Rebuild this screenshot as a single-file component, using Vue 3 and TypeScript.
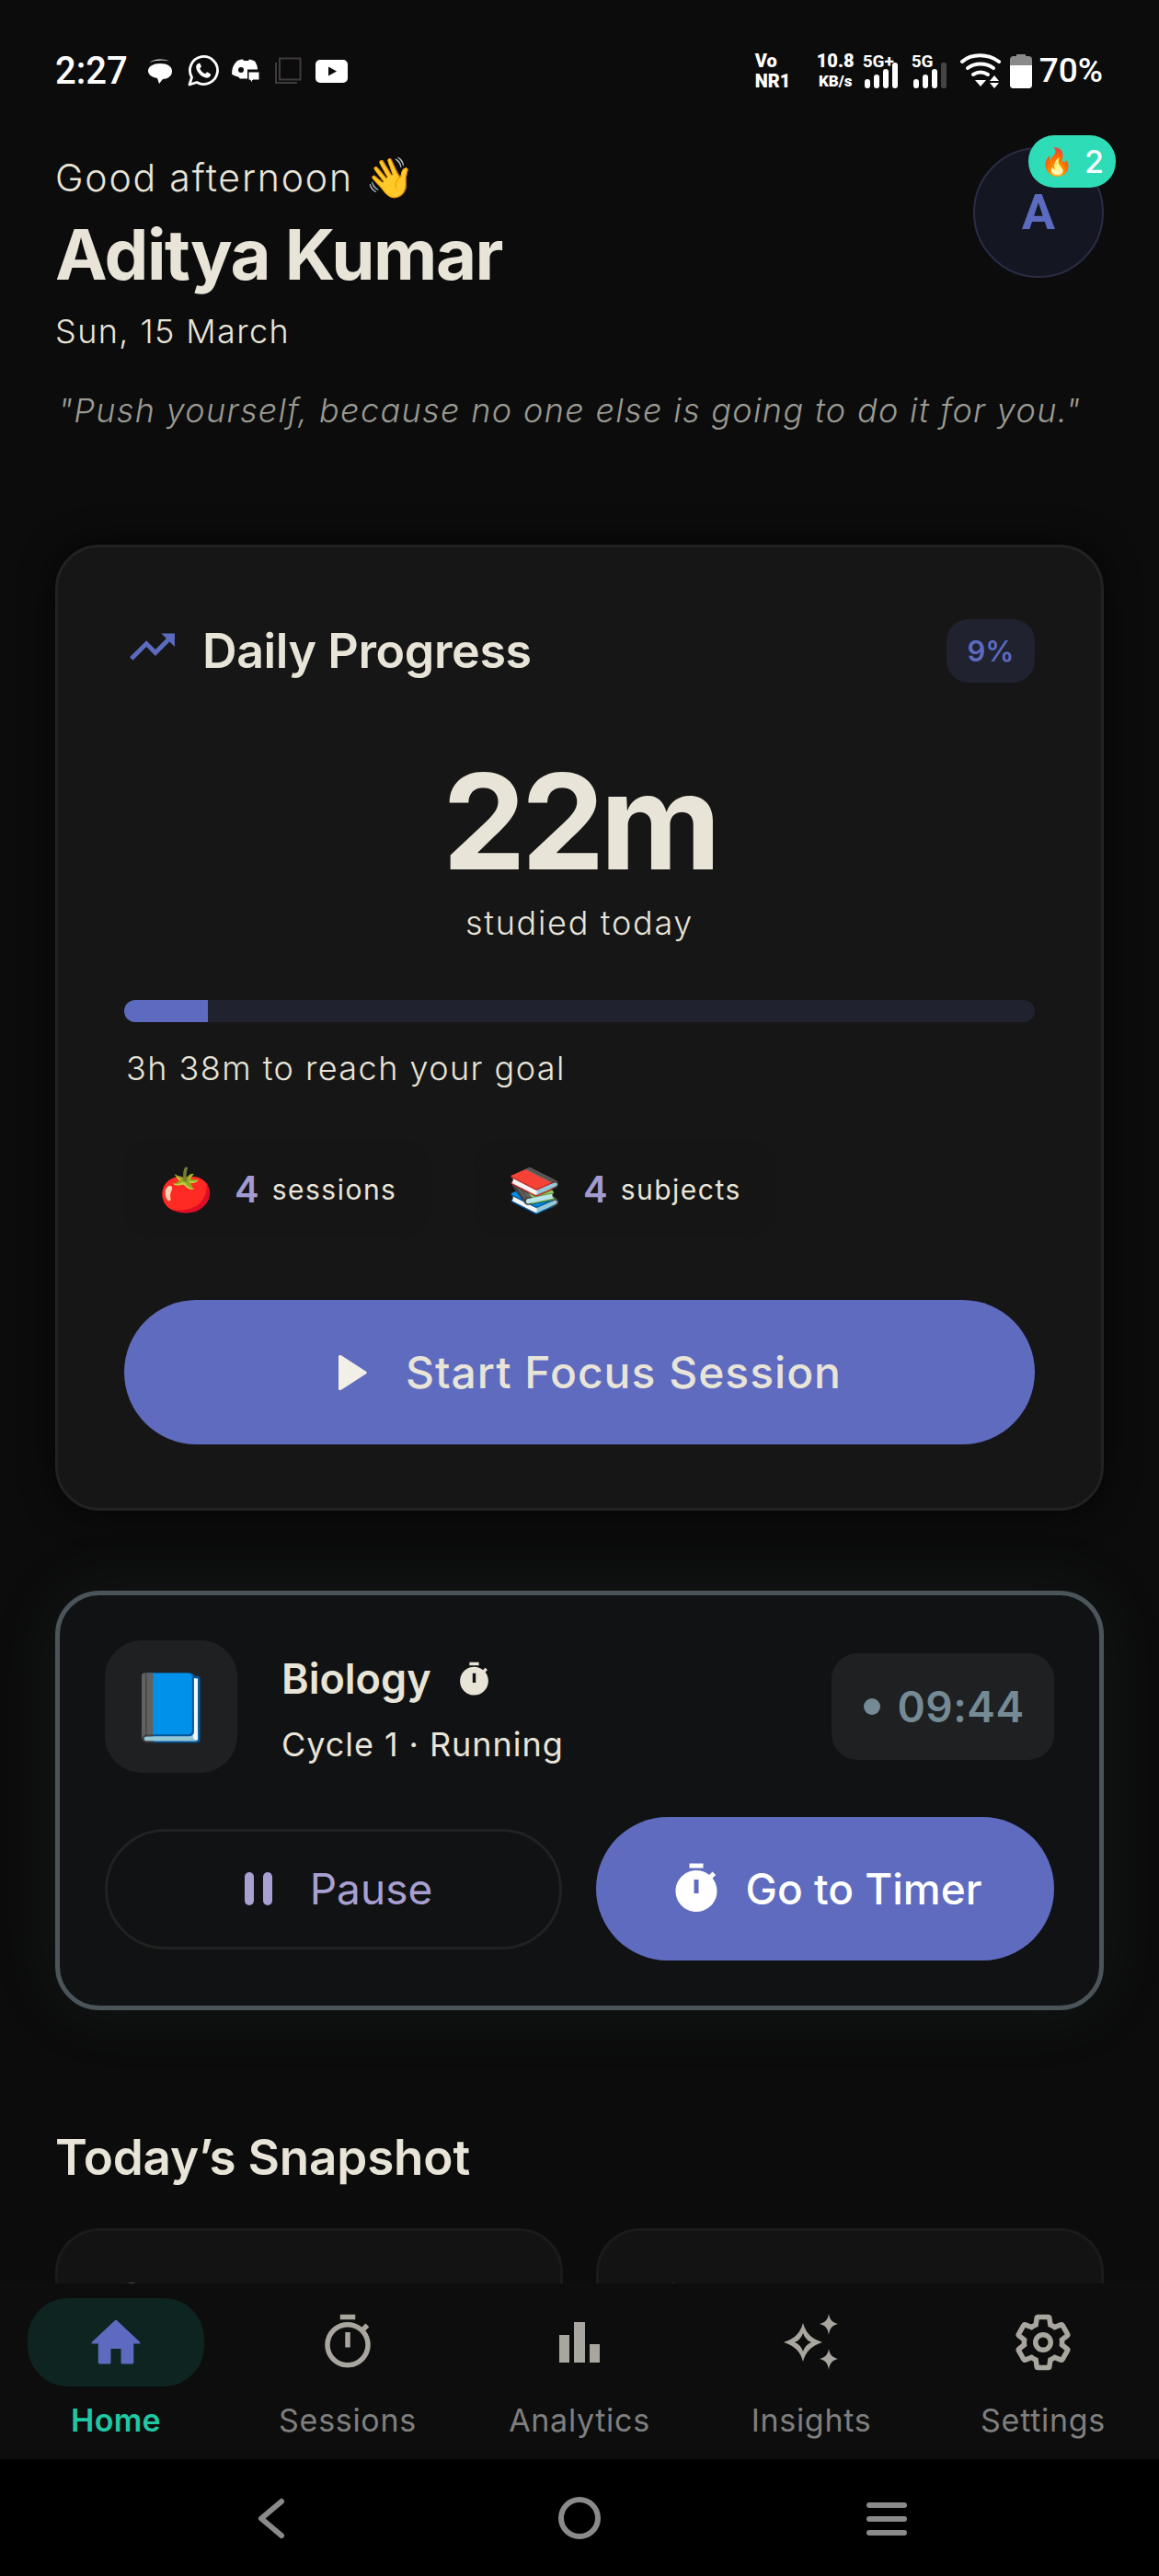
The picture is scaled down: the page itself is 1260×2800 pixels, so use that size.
<script setup lang="ts">
const timerFilled = 'M15 1H9v2h6V1zm-4 13h2V8h-2v6zm8.03-6.61l1.42-1.42c-.43-.51-.9-.99-1.41-1.41l-1.42 1.42C16.07 4.74 14.12 4 12 4c-4.97 0-9 4.03-9 9s4.02 9 9 9 9-4.03 9-9c0-2.12-.74-4.07-1.97-5.61z'
const timerOutlined = 'M15 1H9v2h6V1zm-4 13h2V8h-2v6zm8.03-6.61l1.42-1.42c-.43-.51-.9-.99-1.41-1.41l-1.42 1.42C16.07 4.74 14.12 4 12 4c-4.97 0-9 4.03-9 9s4.02 9 9 9c4.97 0 9-4.03 9-9 0-2.12-.74-4.07-1.97-5.61zM12 20c-3.87 0-7-3.13-7-7s3.13-7 7-7 7 3.13 7 7-3.13 7-7 7z'
const gear = 'M19.43 12.98c.04-.32.07-.64.07-.98 0-.34-.03-.66-.07-.98l2.11-1.65c.19-.15.24-.42.12-.64l-2-3.46c-.12-.22-.39-.3-.61-.22l-2.49 1c-.52-.4-1.08-.73-1.69-.98l-.38-2.65C14.46 2.18 14.25 2 14 2h-4c-.25 0-.46.18-.49.42l-.38 2.65c-.61.25-1.17.59-1.69.98l-2.49-1c-.23-.09-.49 0-.61.22l-2 3.46c-.13.22-.07.49.12.64l2.11 1.65c-.04.32-.07.65-.07.98 0 .33.03.66.07.98l-2.11 1.65c-.19.15-.24.42-.12.64l2 3.46c.12.22.39.3.61.22l2.49-1c.52.4 1.08.73 1.69.98l.38 2.65c.03.24.24.42.49.42h4c.25 0 .46-.18.49-.42l.38-2.65c.61-.25 1.17-.59 1.69-.98l2.49 1c.23.09.49 0 .61-.22l2-3.46c.12-.22.07-.49-.12-.64l-2.11-1.65z'
const progress = 9.2
</script>

<template>
  <div class="phone">
    <main class="scroll">
      <div class="status">
        <div class="status-left">
          <span class="time">2:27</span>
          <svg class="s-chat" width="30" height="30" viewBox="0 0 30 30"><path d="M4 6c3-4 16-5 22-1-6-2-16-2-22 1z" fill="#fff"/><path d="M15 7c8 0 13 3 13 8.500S23 24 18 24l-4 5-2-6C6 22 2 19 2 15c0-5 6-8 13-8z" fill="#fff"/></svg>
          <svg class="s-wa" width="34" height="34" viewBox="0 0 34 34"><path d="M2 32l2.500-8A15 15 0 1 1 10 29.500z" fill="none" stroke="#fff" stroke-width="2.800" stroke-linejoin="round"/><path d="M11.500 9c-2 1-3 3-2 6 1.500 4 5 8 10 9.500 2.500.5 4.500-.5 5.500-2.500l-.2-1.800-3.800-2-1.800 2c-3-1-5.200-3.500-6-6l1.800-1.700-1.800-4z" fill="#fff"/></svg>
          <svg class="s-dc" width="32" height="28" viewBox="0 0 32 28"><path d="M7 3c3-1.200 5-1.500 6-1.500l1 1.500h5l1-1.500c2 .3 4 1 6 2 2 3 3 6 3 9H18v10H10l-2-2c-3-.5-5-1.500-7-3 0-6 2-11 6-14.500z" fill="#fff"/><circle cx="11" cy="13" r="3" fill="#0c0c0c"/><path d="M19 15h12v9h-7l-2 3-1-3h-2z" fill="#fff" stroke="#0c0c0c" stroke-width="1"/></svg>
          <svg class="s-sq" width="30" height="30" viewBox="0 0 30 30"><path d="M2 6v22h23" fill="none" stroke="#3f3a3f" stroke-width="2"/><rect x="6" y="1.500" width="22.500" height="23" fill="none" stroke="#3f3a3f" stroke-width="2"/></svg>
          <svg class="s-yt" width="35" height="25" viewBox="0 0 35 25"><rect width="35" height="25" rx="5" fill="#fff"/><path d="M14 7.500l9 5-9 5z" fill="#0c0c0c"/></svg>
        </div>
        <div class="status-right">
          <span class="stack w-vo"><b>Vo</b><b>NR1</b></span>
          <span class="stack w-kb"><b class="num">10.8</b><b>KB/s</b></span>
          <span class="net">
            <b>5G+</b>
            <svg width="40" height="30" viewBox="0 0 40 30"><g fill="#fff"><rect x="2" y="18" width="6" height="10" rx="3"/><rect x="12" y="13" width="6" height="15" rx="3"/><rect x="22" y="7" width="6" height="21" rx="3"/><rect x="32" y="0" width="6" height="28" rx="3"/></g></svg>
          </span>
          <span class="net">
            <b>5G</b>
            <svg width="40" height="30" viewBox="0 0 40 30"><g fill="#fff"><rect x="2" y="18" width="6" height="10" rx="3"/><rect x="12" y="13" width="6" height="15" rx="3"/><rect x="22" y="7" width="6" height="21" rx="3"/></g><rect x="32" y="0" width="6" height="28" rx="2" fill="#444"/></svg>
          </span>
          <svg class="s-wifi" width="46" height="38" viewBox="0 0 46 38"><g fill="none" stroke="#fff" stroke-width="4" stroke-linecap="round"><path d="M2 9c10-9 28-9 40 0"/><path d="M8 16c8-6 20-6 28 0"/><path d="M14 23c5-3 11-3 16 0"/></g><path d="M16 29h12l-6 7z" fill="#fff"/><path d="M37 24l5 6H32zM37 38l-5-6h10z" fill="#fff"/></svg>
          <svg class="s-bat" width="24" height="37" viewBox="0 0 24 37"><path d="M7 0h10v2h3a4 4 0 0 1 4 4v27a4 4 0 0 1-4 4H4a4 4 0 0 1-4-4V6a4 4 0 0 1 4-4h3z" fill="#8a8a8a"/><path d="M0 12h24v21a4 4 0 0 1-4 4H4a4 4 0 0 1-4-4z" fill="#fff"/></svg>
          <span class="pct">70%</span>
        </div>
      </div>

      <header class="head">
        <div>
          <p class="greet">Good afternoon <span class="emoji">👋</span></p>
          <h1 class="name">Aditya Kumar</h1>
          <p class="date">Sun, 15 March</p>
        </div>
        <div class="avatar">
          A
          <span class="streak"><span class="flame">🔥</span><span>2</span></span>
        </div>
      </header>
      <p class="quote">"Push yourself, because no one else is going to do it for you."</p>

      <section class="card progress">
        <div class="card-head">
          <div class="title-wrap">
            <svg class="trend" width="59" height="44" viewBox="0 0 24 18"><path d="M16 1l2.290 2.290-4.880 4.880-4-4L2 11.590 3.410 13l6-6 4 4 6.300-6.290L22 7V1z" fill="#5c6bc0"/></svg>
            <h2>Daily Progress</h2>
          </div>
          <span class="pct-pill">9%</span>
        </div>
        <div class="big">22m</div>
        <p class="sub">studied today</p>
        <div class="track"><div class="fill" :style="{ width: progress + '%' }"></div></div>
        <p class="goal">3h 38m to reach your goal</p>
        <div class="chips">
          <div class="chip c1"><span class="chip-emoji">🍅</span><b>4</b><span class="chip-label">sessions</span></div>
          <div class="chip c2"><span class="chip-emoji">📚</span><b>4</b><span class="chip-label">subjects</span></div>
        </div>
        <button class="start">
          <svg width="36" height="42" viewBox="0 0 36 42"><path d="M3 3.500v35c0 1.500 1.500 2 3 1.200l27-17.500c1-.7 1-1.700 0-2.400L6 2.300C4.500 1.500 3 2 3 3.500z" fill="#f2efe6"/></svg>
          <span>Start Focus Session</span>
        </button>
      </section>

      <section class="card running">
        <div class="run-top">
          <div class="tile"><span>📘</span></div>
          <div class="run-text">
            <div class="subject">Biology
              <svg width="41" height="41" viewBox="0 0 24 24"><path :d="timerFilled" fill="#e8e4d8" fill-rule="evenodd"/></svg>
            </div>
            <p class="cycle">Cycle 1 · Running</p>
          </div>
          <div class="clock"><i></i><span>09:44</span></div>
        </div>
        <div class="run-actions">
          <button class="pause">
            <svg width="32" height="36" viewBox="0 0 32 36"><rect x="1" y="0" width="10" height="36" rx="5" fill="#a7a0d0"/><rect x="21" y="0" width="10" height="36" rx="5" fill="#a7a0d0"/></svg>
            <span>Pause</span>
          </button>
          <button class="goto">
            <svg width="60" height="60" viewBox="0 0 24 24"><path :d="timerFilled" fill="#fff" fill-rule="evenodd"/></svg>
            <span>Go to Timer</span>
          </button>
        </div>
      </section>

      <h2 class="snap-title">Today’s Snapshot</h2>
      <div class="snap">
        <div class="snap-card">
          <svg class="snap-icon" width="48" height="48" viewBox="0 0 48 48"><circle cx="24" cy="24" r="21" fill="none" stroke="#9a9a94" stroke-width="5"/></svg>
        </div>
        <div class="snap-card sc2">
          <svg class="snap-icon" width="48" height="48" viewBox="0 0 48 48"><path d="M24 0l-8 24h16z" fill="#c9c23a"/></svg>
        </div>
      </div>
    </main>

    <nav class="nav">
      <div class="nav-item active">
        <div class="nav-ico">
          <svg width="66" height="66" viewBox="0 0 24 24"><path d="M10 20v-5.500h4V20c0 .3.200.5.500.5h4c.3 0 .5-.2.500-.5v-7.500h2.300c.3 0 .4-.4.200-.6L12.300 3.300a.5.500 0 0 0-.6 0L2.500 11.900c-.2.200-.1.600.2.600H5V20c0 .3.200.5.500.5h4c.3 0 .5-.2.500-.5z" fill="#5c6bc0"/></svg>
        </div>
        <span>Home</span>
      </div>
      <div class="nav-item">
        <div class="nav-ico"><svg width="66" height="66" viewBox="0 0 24 24"><path :d="timerOutlined" fill="#a8a69e"/></svg></div>
        <span>Sessions</span>
      </div>
      <div class="nav-item">
        <div class="nav-ico"><svg width="44" height="44" viewBox="0 0 44 44"><g fill="#a8a69e"><rect x="0" y="14" width="11" height="30"/><rect x="16" y="0" width="12" height="44"/><rect x="33" y="24" width="11" height="20"/></g></svg></div>
        <span>Analytics</span>
      </div>
      <div class="nav-item">
        <div class="nav-ico">
          <svg width="62" height="62" viewBox="0 0 62 62"><path fill-rule="evenodd" d="M22 10Q26 26 43 31Q26 36 22 52Q18 36 1 31Q18 26 22 10zM22 21Q24.500 28.500 31 31Q24.500 33.500 22 41Q19.500 33.500 13 31Q19.500 28.500 22 21z" fill="#a8a69e"/><path d="M50 0c1 6 3 9 10 11-7 2-9 5-10 12-1-7-3-10-10-12 7-2 9-5 10-11zM50 38c1 6 3 9 10 11-7 2-9 5-10 12-1-7-3-10-10-12 7-2 9-5 10-11z" fill="#a8a69e"/></svg>
        </div>
        <span>Insights</span>
      </div>
      <div class="nav-item">
        <div class="nav-ico"><svg width="66" height="66" viewBox="0 0 24 24"><path :d="gear" fill="none" stroke="#a8a69e" stroke-width="2"/><circle cx="12" cy="12" r="3" fill="none" stroke="#a8a69e" stroke-width="2"/></svg></div>
        <span>Settings</span>
      </div>
    </nav>

    <div class="sys">
      <svg width="60" height="60" viewBox="0 0 60 60"><path d="M42 12L20 30.500 42 49" fill="none" stroke="#8a8a8a" stroke-width="6" stroke-linecap="round" stroke-linejoin="round"/></svg>
      <svg width="60" height="60" viewBox="0 0 60 60"><circle cx="30" cy="30" r="20" fill="none" stroke="#8a8a8a" stroke-width="6"/></svg>
      <svg width="60" height="60" viewBox="0 0 60 60"><g fill="#8a8a8a"><rect x="6" y="13" width="44" height="6" rx="3"/><rect x="6" y="28" width="44" height="6" rx="3"/><rect x="6" y="43" width="44" height="6" rx="3"/></g></svg>
    </div>
  </div>
</template>

<style>
html, body { margin: 0; background: #0c0c0c; }
</style>

<style scoped>
* { box-sizing: border-box; }
p, h1, h2 { margin: 0; font-weight: inherit; }
button { font: inherit; border: 0; padding: 0; cursor: pointer; }
.phone {
  width: 1260px; height: 2800px; display: flex; flex-direction: column; overflow: hidden;
  background: #0c0c0c; color: #e8e4d8;
  font-family: Inter, "Noto Sans", sans-serif;
}
.scroll { flex: 1; min-height: 0; overflow: hidden; padding: 0 60px; }

.status { height: 154px; display: flex; justify-content: space-between; align-items: center; color: #fff; font-family: Roboto, sans-serif; }
.status-left { display: flex; align-items: center; }
.time { font-size: 40px; font-weight: 500; line-height: 40px; transform: scaleY(1.08); margin-right: 20px; }
.s-wa { margin-left: 15px; }
.s-dc { margin-left: 13px; }
.s-sq { margin-left: 15px; }
.s-yt { margin-left: 15px; }
.status-right { display: flex; align-items: center; margin-right: 1px; }
.stack { display: flex; flex-direction: column; font-size: 20px; line-height: 22px; font-weight: 700; }
.w-vo { width: 58px; }
.w-kb { width: 59px; align-items: center; font-size: 17px; }
.w-kb b.num { font-size: 20px; }
.net { position: relative; width: 53px; height: 38px; font-size: 19px; }
.net b { position: absolute; left: 0; top: -2px; line-height: 22px; }
.net svg { position: absolute; left: 0; top: 10px; }
.s-wifi { margin-right: 8px; }
.s-bat { margin-right: 8px; }
.pct { font-size: 37px; font-weight: 500; line-height: 40px; }

.head { display: flex; justify-content: space-between; align-items: flex-start; }
.greet { margin-top: 13px; font-size: 41px; line-height: 50px; font-weight: 300; letter-spacing: 1.800px; }
.emoji { font-size: 43px; }
.name { margin-top: 13px; font-size: 76px; line-height: 90px; font-weight: 700; letter-spacing: -1.500px; }
.date { margin-top: 16px; font-size: 36px; line-height: 46px; font-weight: 300; letter-spacing: 1.400px; }
.avatar {
  position: relative; margin-top: 6px; width: 142px; height: 142px; border-radius: 50%;
  background: #141722; border: 2px solid #2a2c45; color: #5c6bc0;
  display: flex; align-items: center; justify-content: center;
  font-family: Roboto, sans-serif; font-size: 54px; font-weight: 700; line-height: 1;
}
.streak {
  position: absolute; left: 58px; top: -15px; width: 95px; height: 57px; border-radius: 28px;
  background: #2fdcb8; color: #fff; font-family: Inter, sans-serif; font-size: 34px; font-weight: 500;
  display: flex; align-items: center; justify-content: center; gap: 12px; line-height: 1;
}
.flame { font-size: 29px; }
.quote { margin-top: 40px; font-size: 36px; line-height: 46px; font-style: italic; font-weight: 300; color: #9a9a92; letter-spacing: 1.350px; padding-left: 3px; white-space: nowrap; }

.card { border-radius: 48px; }
.progress {
  margin-top: 123px; height: 1050px; padding: 78px 72px 0; border: 3px solid #222222; background: #161616;
  box-shadow: 0 0 36px rgba(0,0,0,.7);
}
.card-head { display: flex; justify-content: space-between; align-items: center; height: 69px; }
.title-wrap { display: flex; align-items: center; gap: 25px; }
.trend { margin-left: 1px; }
.title-wrap h2 { font-size: 52px; line-height: 60px; font-weight: 600; letter-spacing: -.4px; }
.pct-pill { width: 96px; height: 69px; border-radius: 24px; background: #20222f; color: #5c6bc0; font-size: 31px; font-weight: 600; display: flex; align-items: center; justify-content: center; }
.big { margin-top: 79px; font-size: 144px; line-height: 144px; font-weight: 700; text-align: center; letter-spacing: -5px; }
.sub { margin-top: 15px; font-size: 36px; line-height: 46px; font-weight: 300; text-align: center; letter-spacing: 1.700px; }
.track { margin-top: 61px; height: 24px; border-radius: 12px; background: #20222f; overflow: hidden; }
.fill { height: 100%; background: #5c6bc0; }
.goal { margin-top: 27px; padding-left: 2px; font-size: 36px; line-height: 46px; font-weight: 300; letter-spacing: 1.450px; }
.chips { margin-top: 54px; display: flex; gap: 49px; }
.chip { height: 107px; border-radius: 30px; background: #151515; display: flex; align-items: center; padding-top: 2px; }
.c1 { width: 332px; padding-left: 38px; }
.c2 { width: 326px; padding-left: 36px; }
.chip-emoji { width: 56px; font-size: 47px; line-height: 1; text-align: center; margin-right: 26px; }
.chip b { font-size: 40px; font-weight: 600; color: #a29bcf; margin-right: 14px; }
.chip-label { font-size: 30px; letter-spacing: 1.500px; font-weight: 400; }
.start {
  margin-top: 68px; width: 100%; height: 157px; border-radius: 79px; background: #5f6bbf; color: #e8e4d8;
  display: flex; align-items: center; justify-content: center; gap: 40px; font-size: 48px; font-weight: 500; letter-spacing: 1px; padding-left: 20px;
}

.running {
  margin-top: 87px; height: 456px; padding: 49px 49px 0; border: 5px solid #4a5459; background: #111213;
  box-shadow: 0 0 70px rgba(70,100,110,.13);
}
.run-top { display: flex; align-items: center; }
.tile { width: 144px; height: 144px; border-radius: 40px; background: #1e2022; display: flex; align-items: center; justify-content: center; font-size: 72px; line-height: 1; flex: none; }
.run-text { flex: 1; margin-left: 48px; padding-top: 6px; }
.subject { display: flex; align-items: center; gap: 26px; font-size: 45px; line-height: 56px; font-weight: 600; }
.cycle { margin-top: 20px; font-size: 36px; line-height: 46px; letter-spacing: .95px; }
.clock { width: 242px; height: 116px; border-radius: 28px; background: #1e2022; display: flex; align-items: center; justify-content: center; gap: 18px; color: #748a94; font-size: 46px; font-weight: 600; letter-spacing: .5px; padding-left: 3px; }
.clock i { width: 18px; height: 18px; border-radius: 50%; background: #748a94; }
.run-actions { margin-top: 48px; display: flex; align-items: center; gap: 37px; }
.run-actions button { display: flex; align-items: center; justify-content: center; font-size: 46px; flex: none; }
.pause { width: 497px; height: 131px; border-radius: 66px; background: transparent; border: 3px solid #222; color: #a7a0d0; gap: 40px; font-weight: 400; padding-left: 10px; }
.goto { width: 498px; height: 156px; border-radius: 78px; background: #5f6bbf; color: #fff; gap: 24px; font-weight: 500; }

.snap-title { margin-top: 127px; font-size: 53px; line-height: 66px; font-weight: 600; letter-spacing: -.2px; }
.snap { margin-top: 44px; display: grid; grid-template-columns: 1fr 1fr; gap: 36px; }
.snap-card { height: 320px; border: 3px solid #1b1b1b; border-radius: 48px; background: #131313; padding: 56px 0 0 56px; }
.sc2 { padding-left: 57px; }
.snap-icon { display: block; }

.nav { flex: none; height: 191px; display: grid; grid-template-columns: repeat(5, 252px); background: #0d0d0d; padding-top: 16px; position: relative; }
.nav-item { display: flex; flex-direction: column; align-items: center; color: #7f7f7f; font-size: 34px; line-height: 42px; letter-spacing: .7px; font-weight: 400; }
.nav-ico { width: 192px; height: 96px; border-radius: 44px; display: flex; align-items: center; justify-content: center; margin-bottom: 16px; flex: none; }
.active { color: #1fc8a4; font-weight: 600; letter-spacing: .3px; }
.active .nav-ico { background: #0e2420; }

.sys { flex: none; height: 127px; background: #000; display: flex; align-items: center; justify-content: center; gap: 276px; }
</style>
